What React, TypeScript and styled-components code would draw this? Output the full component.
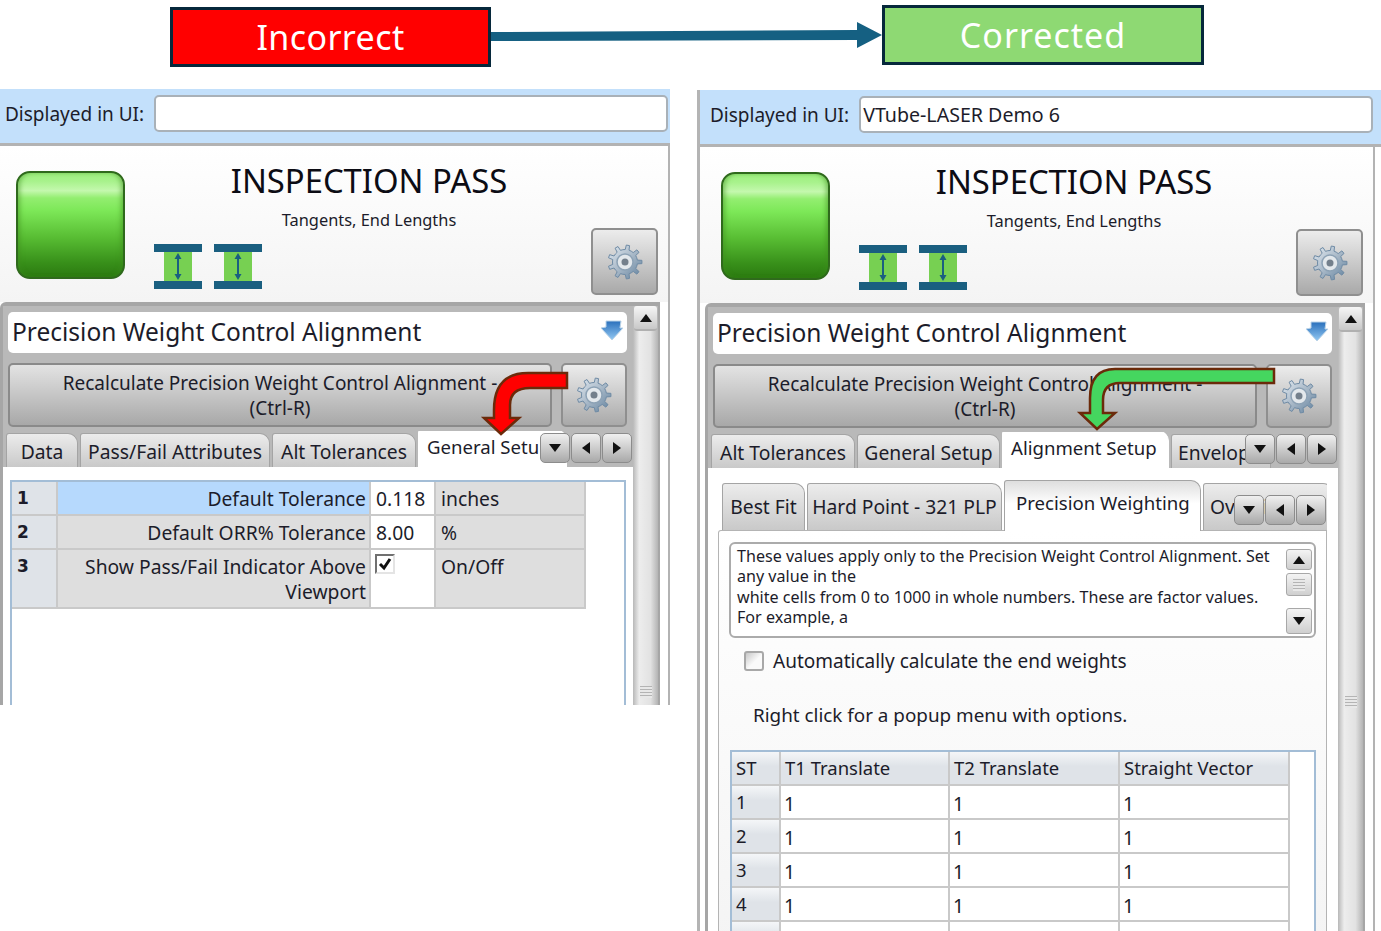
import React from "react";
import styled, { createGlobalStyle } from "styled-components";

const FONT = `"Noto Sans", "Open Sans", "DejaVu Sans", sans-serif`;

const GlobalStyle = createGlobalStyle`
    html, body {
        margin: 0;
        padding: 0;
        background: white;
    }
    * {
        box-sizing: border-box;
    }
`;

// cog outline, the same for every settings button
const cogPath = () => {
    const teeth = 9;
    const points: string[] = [];
    for (let i = 0; i < teeth; i++) {
        const a = (i / teeth) * Math.PI * 2;
        const step = (Math.PI * 2) / teeth;
        const corners: [number, number][] = [
            [12.5, a - step * 0.5],
            [12.5, a - step * 0.22],
            [17, a - step * 0.14],
            [17, a + step * 0.14],
            [12.5, a + step * 0.22],
        ];
        corners.forEach(([r, t]) => {
            points.push(`${(20 + r * Math.cos(t)).toFixed(2)} ${(20 + r * Math.sin(t)).toFixed(2)}`);
        });
    }
    return "M" + points.join("L") + "Z";
};

const Cog = () => (
    <svg width="40" height="40" viewBox="0 0 40 40">
        <defs>
            <linearGradient id="cogFill" x1="0" y1="0" x2="1" y2="1">
                <stop offset="0" stopColor="#e4ebf2" />
                <stop offset="0.5" stopColor="#a9b9c8" />
                <stop offset="1" stopColor="#5f7f9c" />
            </linearGradient>
        </defs>
        <path d={cogPath()} fill="url(#cogFill)" stroke="#6f8ba5" strokeWidth="1" />
        <circle cx="20" cy="20" r="8" fill="#e3e8ec" stroke="#8da2b5" strokeWidth="1.5" />
        <circle cx="20" cy="20" r="3.5" fill="#74808c" />
    </svg>
);

const BeamIcon = () => (
    <svg width="48" height="45" viewBox="0 0 48 45">
        <rect x="10" y="7" width="28" height="31" fill="#77d052" />
        <rect x="0" y="0" width="48" height="8" fill="#1a5f80" />
        <rect x="0" y="37" width="48" height="8" fill="#1a5f80" />
        <path d="M24 9 L27.5 15 H25 V30 H27.5 L24 36 L20.5 30 H23 V15 H20.5 Z" fill="#1a5f80" />
    </svg>
);

const ComboArrow = () => (
    <svg width="24" height="22" viewBox="0 0 24 22">
        <defs>
            <linearGradient id="comboFill" x1="0" y1="0" x2="0" y2="1">
                <stop offset="0" stopColor="#2a70bc" />
                <stop offset="1" stopColor="#93c8f2" />
            </linearGradient>
        </defs>
        <path d="M6 1 H21 L20 8 H23 L12 20 L1 8 L6 7 Z" fill="url(#comboFill)" stroke="#bcd4e8" strokeWidth="1" />
    </svg>
);

const Page = styled.div`
    position: relative;
    width: 1381px;
    height: 931px;
    overflow: hidden;
    background: white;
    font-family: ${FONT};
    color: #1c1c2a;
`;

const Banner = styled.div`
    display: flex;
    height: 89px;
    padding-left: 170px;
`;

const Label = styled.div<{ $bg: string; $w: number; $top: number; $spacing: number }>`
    display: flex;
    align-items: center;
    justify-content: center;
    width: ${(p) => p.$w}px;
    height: 60px;
    margin-top: ${(p) => p.$top}px;
    background: ${(p) => p.$bg};
    border: 3px solid #06283b;
    color: white;
    font-size: 34px;
    letter-spacing: ${(p) => p.$spacing}px;
`;

const Connector = styled.svg`
    display: block;
    flex: none;
`;

const Panels = styled.div`
    display: flex;
    align-items: flex-start;
    gap: 27px;
`;

const Panel = styled.div<{ $w: number; $h: number; $top: number; $inset: number }>`
    position: relative;
    flex: none;
    width: ${(p) => p.$w}px;
    height: ${(p) => p.$h}px;
    margin-top: ${(p) => p.$top}px;
    overflow: hidden;
    background: white;
    border-left: ${(p) => (p.$inset ? "3px solid #b4b4b4" : "none")};

    /* the window's right edge, below the blue bar */
    &::after {
        content: "";
        position: absolute;
        top: 54px;
        bottom: 0;
        left: ${(p) => p.$inset + 668}px;
        width: 2px;
        background: #b3b3b3;
    }
`;

const TopBar = styled.div<{ $inset: number }>`
    display: flex;
    align-items: center;
    gap: 10px;
    height: 57px;
    padding: 0 0 5px ${(p) => p.$inset + 5}px;
    background: #c3e0fb;
    border-bottom: 3px solid #b3b3b3;
    font-size: 19px;
    white-space: nowrap;
`;

const NameInput = styled.div`
    display: flex;
    align-items: center;
    width: 514px;
    height: 37px;
    padding-left: 2px;
    background: white;
    border: 2px solid #a9b1b8;
    border-radius: 5px;
    font-size: 19.6px;
`;

const Status = styled.div<{ $inset: number }>`
    display: flex;
    align-items: flex-start;
    width: ${(p) => p.$inset + 668}px;
    height: 156px;
    padding: 14px 10px 0 ${(p) => p.$inset + 16}px;
    background: linear-gradient(#ffffff, #f4f4f4);
`;

const Led = styled.div`
    flex: none;
    width: 109px;
    height: 108px;
    margin-top: 11px;
    border: 2px solid #2f6a1c;
    border-radius: 14px;
    background: linear-gradient(#9cee7e 0%, #a8f28c 8%, #c4f8ae 17%, #93ee70 24%, #7de858 36%, #58bd33 62%, #38901a 86%, #2b7a10 100%);
    box-shadow: inset 4px 0 5px -2px rgba(60, 140, 30, 0.55), inset -4px 0 5px -2px rgba(60, 140, 30, 0.55);
`;

const StatusText = styled.div`
    flex: none;
    width: 430px;
    margin-left: 29px;
`;

const Title = styled.div`
    height: 42px;
    font-size: 32.8px;
    line-height: 42px;
    text-align: center;
    color: #0c0c14;
    white-space: nowrap;
`;

const Subtitle = styled.div`
    height: 20px;
    margin-top: 8px;
    font-size: 16.4px;
    line-height: 20px;
    text-align: center;
`;

const Beams = styled.div`
    display: flex;
    gap: 12px;
    margin-top: 14px;
`;

const CogButton = styled.div<{ $w: number; $h: number }>`
    display: flex;
    align-items: center;
    justify-content: center;
    flex: none;
    width: ${(p) => p.$w}px;
    height: ${(p) => p.$h}px;
    background: linear-gradient(#ececec, #a9a9a9);
    border: 2px solid #8f8f8f;
    border-radius: 5px;
`;

const StatusCog = styled(CogButton)`
    margin: 68px 0 0 7px;
`;

const Frame = styled.div<{ $inset: number }>`
    display: flex;
    width: 660px;
    height: 1000px;
    margin-left: ${(p) => p.$inset}px;
    background: white;
    border-top: 4px solid #a6a6a6;
    border-left: 3px solid #a6a6a6;
    border-right: 2px solid #a6a6a6;
    border-top-left-radius: 6px;
`;

const FrameBody = styled.div`
    flex: none;
    width: 630px;
    display: flex;
    flex-direction: column;
`;

const FormArea = styled.div`
    padding: 6px 6px 0 5px;
    background: #b9b9b9;
`;

const Combo = styled.div`
    display: flex;
    align-items: center;
    justify-content: space-between;
    height: 41px;
    padding: 0 3px 3px 4px;
    background: white;
    border-radius: 5px;
    font-size: 24.5px;
    white-space: nowrap;
`;

const ActionRow = styled.div`
    display: flex;
    gap: 9px;
    margin-top: 10px;
`;

const Recalculate = styled.div`
    flex: none;
    width: 544px;
    height: 64px;
    padding-top: 6px;
    background: linear-gradient(#e3e3e3, #a8a8a8);
    border: 2px solid #8a8a8a;
    border-radius: 5px;
    font-size: 19px;
    line-height: 25px;
    text-align: center;
    white-space: nowrap;
`;

const TabStrip = styled.div<{ $h: number; $pad: number; $inner?: boolean }>`
    position: relative;
    z-index: 1;
    display: flex;
    align-items: flex-end;
    gap: 2px;
    height: ${(p) => p.$h}px;
    margin: ${(p) => (p.$inner ? "11px 0 -1px 0" : "4px -6px 0 -5px")};
    padding-left: ${(p) => p.$pad}px;
    overflow: hidden;
`;

const Tab = styled.div<{ $w: number; $h: number; $lift?: number; $textLeft?: boolean }>`
    display: flex;
    align-items: center;
    justify-content: ${(p) => (p.$textLeft ? "flex-start" : "center")};
    flex: none;
    width: ${(p) => p.$w}px;
    height: ${(p) => p.$h}px;
    margin-bottom: ${(p) => p.$lift ?? 0}px;
    padding: ${(p) => (p.$lift ? "0 0 2px" : "2px 0 0")} ${(p) => (p.$textLeft ? 6 : 0)}px;
    background: linear-gradient(#ececec, #c9c9c9);
    border: 1px solid #a4a4a4;
    border-bottom: none;
    border-radius: 3px 10px 0 0;
    font-size: 19.3px;
    white-space: nowrap;
    overflow: hidden;
`;

const ActiveTab = styled.div<{ $w: number; $h: number; $framed?: boolean; $padTop: number; $padLeft: number }>`
    flex: none;
    width: ${(p) => p.$w}px;
    height: ${(p) => p.$h}px;
    padding: ${(p) => p.$padTop}px 0 0 ${(p) => p.$padLeft}px;
    background: ${(p) => (p.$framed ? "linear-gradient(#dedede, #ffffff 45%)" : "white")};
    border: 1px solid ${(p) => (p.$framed ? "#a4a4a4" : "white")};
    border-bottom: none;
    border-radius: 3px 10px 0 0;
    font-size: 18.6px;
    line-height: 25px;
    white-space: nowrap;
    overflow: hidden;
`;

const TabArrows = styled.div<{ $top: number }>`
    position: absolute;
    right: 1px;
    top: ${(p) => p.$top}px;
    display: flex;
    gap: 1px;
`;

const ArrowButton = styled.div`
    display: flex;
    align-items: center;
    justify-content: center;
    width: 30px;
    height: 30px;
    background: linear-gradient(#f0f0f0, #a9a9a9);
    border: 1px solid #8c8c8c;
    border-radius: 5px;
`;

const Triangle = styled.span<{ $dir: "up" | "down" | "left" | "right"; $size?: number }>`
    width: 0;
    height: 0;
    border: ${(p) => p.$size ?? 6}px solid transparent;
    ${(p) => {
        const s = p.$size ?? 6;
        const side = { up: "bottom", down: "top", left: "right", right: "left" }[p.$dir];
        const shift = { up: `margin-bottom: ${s}px;`, down: `margin-top: ${s}px;`, left: `margin-right: ${s}px;`, right: `margin-left: ${s}px;` }[p.$dir];
        return `border-${side}: ${s + 2}px solid #111; ${shift}`;
    }}
`;

const TabPane = styled.div`
    flex: 1;
    background: white;
    padding: 13px 7px 0 7px;
`;

const TableView = styled.div`
    background: white;
    border: 2px solid #a3bdd6;
    border-bottom: none;
    height: 1000px;
`;

const Grid = styled.div<{ $cols: string; $rows: string }>`
    display: grid;
    grid-template-columns: ${(p) => p.$cols};
    grid-template-rows: ${(p) => p.$rows};
    width: fit-content;
`;

const Cell = styled.div<{
    $bg?: string;
    $align?: string;
    $bold?: boolean;
    $pad?: string;
}>`
    padding: ${(p) => p.$pad ?? "4px 5px 0 5px"};
    background: ${(p) => p.$bg ?? "white"};
    border-right: 2px solid #c9c9c9;
    border-bottom: 2px solid #c9c9c9;
    font-size: ${(p) => (p.$bold ? 17 : 19.3)}px;
    font-family: ${(p) => (p.$bold ? `"DejaVu Sans", sans-serif` : "inherit")};
    font-weight: ${(p) => (p.$bold ? 700 : 400)};
    line-height: 25px;
    text-align: ${(p) => p.$align ?? "left"};
`;

const HeadCell = styled(Cell)`
    background: linear-gradient(#f4f6f8 0%, #dfe3e8 45%);
    font-size: 18.5px;
`;

const TickBox = styled.div`
    display: flex;
    align-items: center;
    justify-content: center;
    width: 20px;
    height: 20px;
    margin-left: -1px;
    border: 2px solid #e4e4e4;
    border-top-color: #707070;
    border-left-color: #707070;
`;

const VScroll = styled.div`
    flex: none;
    width: 25px;
    display: flex;
    flex-direction: column;
    padding: 0 1px;
    background: linear-gradient(90deg, #b8b8b8, #ededed 25%, #e2e2e2 70%, #b4b4b4);
`;

const VScrollTop = styled.div`
    display: flex;
    align-items: center;
    justify-content: center;
    height: 25px;
    background: linear-gradient(#f6f6f6, #c8c8c8);
    border-bottom: 2px solid #b0b0b0;
    border-radius: 3px;
`;

const Grip = styled.div<{ $top: number }>`
    width: 12px;
    height: 12px;
    margin: ${(p) => p.$top}px auto 0;
    background: repeating-linear-gradient(#b4b4b4 0 1px, #e8e8e8 1px 3px);
`;

const InnerWidget = styled.div`
    display: flex;
    flex-direction: column;
    margin: 0 11px 0 10px;
`;

const OuterPane = styled.div`
    flex: 1;
    background: white;
`;

const InnerPane = styled.div`
    height: 1000px;
    padding: 11px 0 0 10px;
    background: linear-gradient(#ffffff, #f4f4f4 420px);
    border: 1px solid #b4b4b4;
    border-bottom: none;
    border-radius: 3px 0 0 0;
`;

const Notes = styled.div`
    display: flex;
    justify-content: space-between;
    width: 587px;
    height: 96px;
    padding: 2px 0 0 6px;
    background: white;
    border: 2px solid #ababab;
    border-radius: 6px;
    font-size: 16.1px;
    line-height: 20.3px;
    white-space: nowrap;
`;

const NotesScroll = styled.div`
    flex: none;
    width: 26px;
    display: flex;
    flex-direction: column;
    justify-content: space-between;
    margin: 3px 2px 2px 0;
`;

const NotesButton = styled.div<{ $h: number; $mt?: number }>`
    display: flex;
    align-items: center;
    justify-content: center;
    height: ${(p) => p.$h}px;
    margin-top: ${(p) => p.$mt ?? 0}px;
    background: linear-gradient(#f4f4f4, #cfcfcf);
    border: 1px solid #a8a8a8;
    border-radius: 3px;
`;

const CheckRow = styled.div`
    display: flex;
    align-items: center;
    gap: 9px;
    height: 22px;
    margin: 12px 0 0 15px;
    font-size: 19px;
`;

const CheckBox = styled.div`
    width: 20px;
    height: 20px;
    background: linear-gradient(135deg, #c8c8c8, #fafafa 55%);
    border: 2px solid #a8a8a8;
    border-radius: 3px;
`;

const Hint = styled.div`
    margin: 29px 0 0 24px;
    height: 28px;
    font-size: 18.85px;
    line-height: 28px;
`;

const WeightView = styled(TableView)`
    margin: 21px 0 0 1px;
    width: 586px;
`;

const Overlay = styled.svg`
    position: absolute;
    left: 0;
    top: 0;
    z-index: 2;
    pointer-events: none;
`;

const TabButtons = ({ top }: { top: number }) => (
    <TabArrows $top={top}>
        <ArrowButton><Triangle $dir="down" /></ArrowButton>
        <ArrowButton><Triangle $dir="left" /></ArrowButton>
        <ArrowButton><Triangle $dir="right" /></ArrowButton>
    </TabArrows>
);

const Scroller = ({ grip }: { grip: number }) => (
    <VScroll>
        <VScrollTop><Triangle $dir="up" /></VScrollTop>
        <Grip $top={grip} />
    </VScroll>
);

const PanelHead = ({ inset, shown }: { inset: number; shown: string }) => (
    <>
        <TopBar $inset={inset}>
            Displayed in UI:
            <NameInput>{shown}</NameInput>
        </TopBar>
        <Status $inset={inset}>
            <Led />
            <StatusText>
                <Title>INSPECTION PASS</Title>
                <Subtitle>Tangents, End Lengths</Subtitle>
                <Beams>
                    <BeamIcon />
                    <BeamIcon />
                </Beams>
            </StatusText>
            <StatusCog $w={67} $h={67}><Cog /></StatusCog>
        </Status>
    </>
);

const FormTop = ({ tabs, active, trailing }: { tabs: [string, number][]; active: [string, number]; trailing?: string }) => (
    <FormArea>
        <Combo>
            Precision Weight Control Alignment
            <ComboArrow />
        </Combo>
        <ActionRow>
            <Recalculate>
                Recalculate Precision Weight Control Alignment -<br />
                (Ctrl-R)
            </Recalculate>
            <CogButton $w={66} $h={64}><Cog /></CogButton>
        </ActionRow>
        <TabStrip $h={36} $pad={3}>
            {tabs.map(([label, w]) => (
                <Tab key={label} $w={w} $h={34}>{label}</Tab>
            ))}
            <ActiveTab $w={active[1]} $h={37} $padTop={3} $padLeft={8}>{active[0]}</ActiveTab>
            {trailing && <Tab $w={100} $h={34} $textLeft>{trailing}</Tab>}
            <TabButtons top={2} />
        </TabStrip>
    </FormArea>
);

const App = () => {
    const grey = "#dedede";
    const rowHead = "#dfe3e8";
    const weightRows = ["1", "2", "3", "4", ""];

    return (
        <Page>
            <GlobalStyle />
            <Banner>
                <Label $bg="#ff0000" $w={321} $top={7} $spacing={0.4}>Incorrect</Label>
                <Connector width="391" height="70" viewBox="0 0 391 70">
                    <path d="M0 32 L366 30 V22 L391 35 L366 48 V40 L0 41 Z" fill="#156082" />
                </Connector>
                <Label $bg="#8ed973" $w={322} $top={5} $spacing={1}>Corrected</Label>
            </Banner>

            <Panels>
                <Panel $w={670} $h={616} $top={0} $inset={0}>
                    <PanelHead inset={0} shown="" />
                    <Frame $inset={0}>
                        <FrameBody>
                            <FormTop
                                tabs={[["Data", 72], ["Pass/Fail Attributes", 190], ["Alt Tolerances", 144]]}
                                active={["General Setup", 149]}
                            />
                            <TabPane>
                                <TableView>
                                    <Grid $cols="46px 313px 65px 150px" $rows="34px 34px 59px">
                                        <Cell $bg={rowHead} $bold>1</Cell>
                                        <Cell $bg="#b6d9fd" $align="right" $pad="4px 3px 0 0">Default Tolerance</Cell>
                                        <Cell>0.118</Cell>
                                        <Cell $bg={grey}>inches</Cell>
                                        <Cell $bg={rowHead} $bold>2</Cell>
                                        <Cell $bg={grey} $align="right" $pad="4px 3px 0 0">Default ORR% Tolerance</Cell>
                                        <Cell>8.00</Cell>
                                        <Cell $bg={grey}>%</Cell>
                                        <Cell $bg={rowHead} $bold>3</Cell>
                                        <Cell $bg={grey} $align="right" $pad="4px 3px 0 0">Show Pass/Fail Indicator Above Viewport</Cell>
                                        <Cell>
                                            <TickBox>
                                                <svg width="14" height="14" viewBox="0 0 14 14">
                                                    <path d="M2 7 L6 11 L12 2" fill="none" stroke="#111" strokeWidth="3" />
                                                </svg>
                                            </TickBox>
                                        </Cell>
                                        <Cell $bg={grey}>On/Off</Cell>
                                    </Grid>
                                </TableView>
                            </TabPane>
                        </FrameBody>
                        <Scroller grip={355} />
                    </Frame>
                </Panel>

                <Panel $w={684} $h={841} $top={1} $inset={5}>
                    <PanelHead inset={5} shown="VTube-LASER Demo 6" />
                    <Frame $inset={5}>
                        <FrameBody>
                            <FormTop
                                tabs={[["Alt Tolerances", 144], ["General Setup", 143]]}
                                active={["Alignment Setup", 167]}
                                trailing="Envelope"
                            />
                            <OuterPane>
                                <InnerWidget>
                                    <TabStrip $h={52} $pad={4} $inner>
                                        <Tab $w={83} $h={47} $lift={1}>Best Fit</Tab>
                                        <Tab $w={195} $h={47} $lift={1}>Hard Point - 321 PLP</Tab>
                                        <ActiveTab $w={197} $h={51} $framed $padTop={9} $padLeft={11}>Precision Weighting</ActiveTab>
                                        <Tab $w={130} $h={47} $lift={1} $textLeft>Overview</Tab>
                                        <TabButtons top={16} />
                                    </TabStrip>
                                    <InnerPane>
                                        <Notes>
                                            <div>
                                                These values apply only to the Precision Weight Control Alignment. Set<br />
                                                any value in the<br />
                                                white cells from 0 to 1000 in whole numbers. These are factor values.<br />
                                                For example, a
                                            </div>
                                            <NotesScroll>
                                                <div>
                                                    <NotesButton $h={21}><Triangle $dir="up" /></NotesButton>
                                                    <NotesButton $h={23} $mt={3}>
                                                        <Grip $top={0} />
                                                    </NotesButton>
                                                </div>
                                                <NotesButton $h={26}><Triangle $dir="down" /></NotesButton>
                                            </NotesScroll>
                                        </Notes>
                                        <CheckRow>
                                            <CheckBox />
                                            Automatically calculate the end weights
                                        </CheckRow>
                                        <Hint>Right click for a popup menu with options.</Hint>
                                        <WeightView>
                                            <Grid $cols="49px 169px 170px 170px" $rows="34px repeat(5, 34px)">
                                                {["ST", "T1 Translate", "T2 Translate", "Straight Vector"].map((h) => (
                                                    <HeadCell key={h} $pad="3px 5px 0 4px">{h}</HeadCell>
                                                ))}
                                                {weightRows.map((n, i) => (
                                                    <React.Fragment key={i}>
                                                        <HeadCell $pad="3px 5px 0 4px">{n}</HeadCell>
                                                        <Cell $pad="5px 5px 0 3px">{n && "1"}</Cell>
                                                        <Cell $pad="5px 5px 0 3px">{n && "1"}</Cell>
                                                        <Cell $pad="5px 5px 0 3px">{n && "1"}</Cell>
                                                    </React.Fragment>
                                                ))}
                                            </Grid>
                                        </WeightView>
                                    </InnerPane>
                                </InnerWidget>
                            </OuterPane>
                        </FrameBody>
                        <Scroller grip={364} />
                    </Frame>
                </Panel>
            </Panels>

            <Overlay width="1381" height="931" viewBox="0 0 1381 931">
                <path
                    d="M567 373 H528 Q494 373 494 410 V418 H484 L501 434 L519 418 H510 V405 Q510 388 530 388 H567 Z"
                    fill="#ff0000"
                    stroke="#6b2a0a"
                    strokeWidth="2.5"
                />
                <path
                    d="M1274 369 H1115 Q1090 369 1090 398 V413 H1080 L1097 429 L1115 413 H1103 V400 Q1103 383 1120 383 H1274 Z"
                    fill="#45d65f"
                    stroke="#6b2a0a"
                    strokeWidth="2.5"
                />
            </Overlay>
        </Page>
    );
};

export default App;
